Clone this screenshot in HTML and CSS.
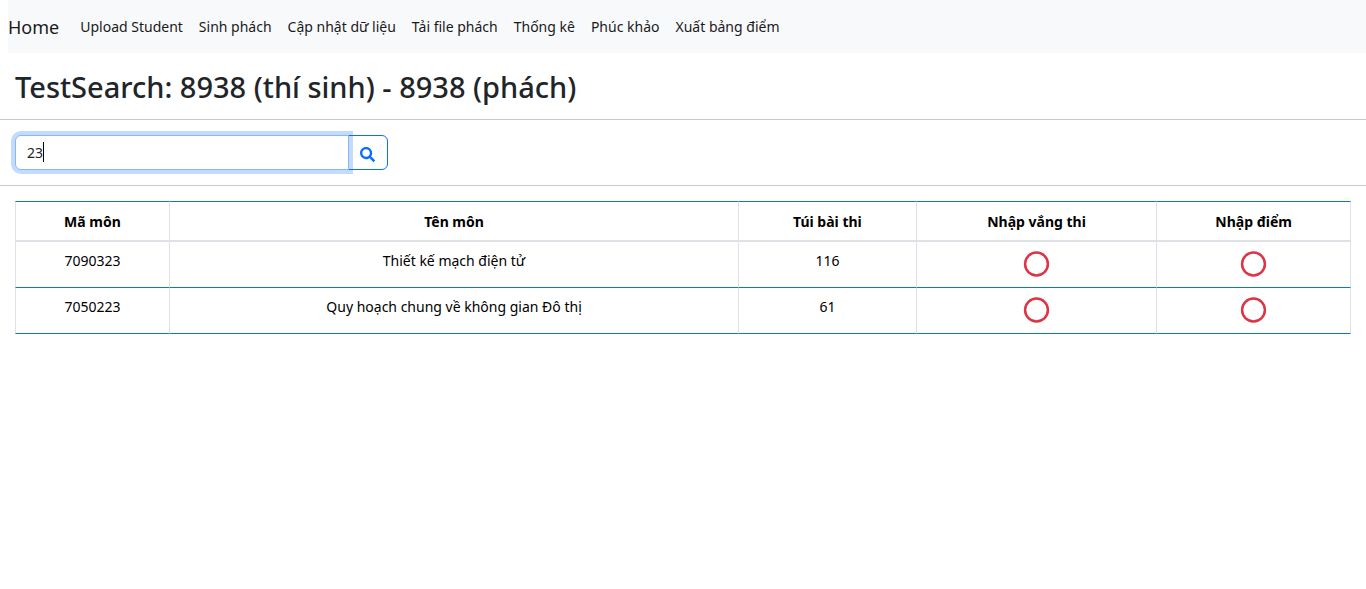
FILE: index.html
```html
<!DOCTYPE html>
<html lang="vi">
<head>
<meta charset="utf-8">
<meta name="viewport" content="width=device-width, initial-scale=1">
<title>TestSearch</title>
<link rel="stylesheet" href="styles.css">
</head>
<body>
<nav class="navbar">
  <a class="brand" href="#">Home</a>
  <ul class="nav-list">
    <li><a href="#">Upload Student</a></li>
    <li><a href="#">Sinh phách</a></li>
    <li><a href="#">Cập nhật dữ liệu</a></li>
    <li><a href="#">Tải file phách</a></li>
    <li><a href="#">Thống kê</a></li>
    <li><a href="#">Phúc khảo</a></li>
    <li><a href="#">Xuất bảng điểm</a></li>
  </ul>
</nav>
<main>
  <h1 class="title">TestSearch: 8938 (thí sinh) - 8938 (phách)</h1>
  <form class="search">
    <div class="field">
      <input class="search-input" type="text" value="23" aria-label="Tìm kiếm">
      <span class="caret"></span>
    </div>
    <button class="search-button" type="button" aria-label="Tìm">
      <svg width="15" height="15" viewBox="0 0 512 512" fill="currentColor"><path d="M505 442.700 405.300 343c-4.500-4.500-10.600-7-17-7H372c27.600-35.300 44-79.700 44-128C416 93.100 322.900 0 208 0S0 93.100 0 208s93.100 208 208 208c48.300 0 92.700-16.400 128-44v16.300c0 6.400 2.500 12.500 7 17l99.700 99.700c9.400 9.400 24.600 9.400 33.900 0l28.300-28.300c9.400-9.400 9.400-24.600.1-34zM208 336c-70.700 0-128-57.200-128-128 0-70.700 57.200-128 128-128 70.700 0 128 57.200 128 128 0 70.700-57.200 128-128 128z"/></svg>
    </button>
  </form>
  <div class="table-wrap">
    <table class="subjects">
      <colgroup><col class="col-code"><col class="col-name"><col class="col-bags"><col class="col-absent"><col class="col-score"></colgroup>
      <thead>
        <tr><th>Mã môn</th><th>Tên môn</th><th>Túi bài thi</th><th>Nhập vắng thi</th><th>Nhập điểm</th></tr>
      </thead>
      <tbody>
        <tr>
          <td>7090323</td><td>Thiết kế mạch điện tử</td><td>116</td>
          <td><svg class="ring" viewBox="0 0 26 26"><circle cx="12.500" cy="13" r="11.400"/></svg></td>
          <td><svg class="ring" viewBox="0 0 26 26"><circle cx="12.500" cy="13" r="11.400"/></svg></td>
        </tr>
        <tr>
          <td>7050223</td><td>Quy hoạch chung về không gian Đô thị</td><td>61</td>
          <td><svg class="ring" viewBox="0 0 26 26"><circle cx="12.500" cy="13" r="11.400"/></svg></td>
          <td><svg class="ring" viewBox="0 0 26 26"><circle cx="12.500" cy="13" r="11.400"/></svg></td>
        </tr>
      </tbody>
    </table>
  </div>
</main>
</body>
</html>
```
FILE: styles.css
```css
* { box-sizing: border-box; }
body {
  margin: 0;
  background: #fff;
  color: #212529;
  font: 14px/22px "Noto Sans", "Open Sans", sans-serif;
}
.navbar {
  display: flex;
  align-items: center;
  gap: 21px;
  min-height: 53px;
  margin-left: 8px;
  background: #f8f9fa;
}
.navbar a { color: #1a1a1a; text-decoration: none; }
.navbar .brand { font-size: 18px; }
.nav-list {
  display: flex;
  gap: 16px;
  margin: 0;
  padding: 0;
  list-style: none;
}
.title {
  margin: 0;
  padding: 16px 15px 14px;
  font-size: 29px;
  line-height: 36px;
  font-weight: 500;
}
.search {
  display: flex;
  padding: 15px;
  border-top: 1px solid #c8c9ca;
  border-bottom: 1px solid #c8c9ca;
}
.field { position: relative; width: 334px; z-index: 1; }
.search-input {
  display: block;
  width: 100%;
  height: 35px;
  padding: 6px 11px;
  border: 1px solid #86b7fe;
  border-radius: 6px 0 0 6px;
  box-shadow: 0 0 0 4px rgba(13, 110, 253, .25);
  outline: 0;
  background: #fff;
  color: #212529;
  font: inherit;
}
.caret {
  position: absolute;
  top: 7px;
  left: 28px;
  width: 1px;
  height: 20px;
  background: #000;
}
.search-button {
  display: flex;
  align-items: center;
  justify-content: center;
  width: 40px;
  height: 35px;
  margin-left: -1px;
  padding: 3px 2px 0 0;
  border: 1px solid #0d6efd;
  border-radius: 0 6px 6px 0;
  background: #fff;
  color: #0d6efd;
}
.table-wrap { padding: 15px; }
.subjects {
  width: 100%;
  table-layout: fixed;
  border-spacing: 0;
  color: #000;
  text-align: center;
}
.col-code { width: 11.6%; }
.col-name { width: 42.6%; }
.col-bags { width: 13.3%; }
.col-absent { width: 18%; }
.col-score { width: 14.5%; }
.subjects th,
.subjects td {
  padding: 8px;
  border-right: 1px solid #dee2e6;
}
.subjects th:first-child,
.subjects td:first-child { border-left: 1px solid #dee2e6; }
.subjects th {
  height: 41px;
  padding-bottom: 7px;
  border-top: 1px solid #0d6efd;
  border-bottom: 2px solid #dee2e6;
  font-weight: 700;
}
.subjects td {
  height: 46px;
  border-bottom: 1px solid #0d6efd;
  vertical-align: top;
}
.ring {
  display: block;
  width: 26px;
  height: 26px;
  margin: 1px auto 0;
  overflow: visible;
  fill: none;
  stroke: #dc3545;
  stroke-width: 2.5;
}
```
